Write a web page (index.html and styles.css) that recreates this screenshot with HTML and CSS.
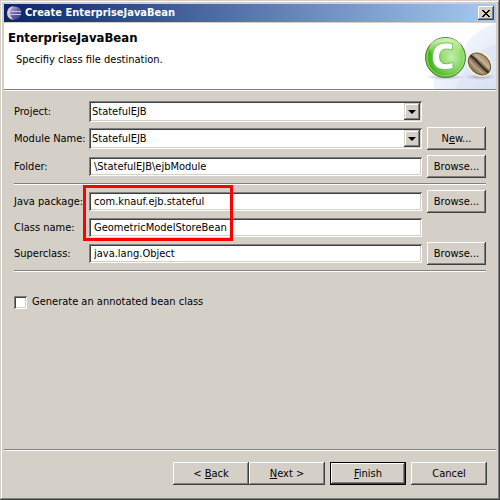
FILE: index.html
```html
<!DOCTYPE html>
<html lang="en">
<head>
    <meta charset="UTF-8">
    <meta name="viewport" content="width=device-width, initial-scale=1.0">
    <title>Create EnterpriseJavaBean</title>
    <link rel="stylesheet" href="styles.css">
</head>
<body>
    <form class="window">
        <div class="title-bar">
            <svg class="title-icon" width="16" height="16" viewBox="0 0 16 16" aria-hidden="true">
                <defs>
                    <linearGradient id="orb" x1="0" y1="0" x2="1" y2="1">
                        <stop offset="0" stop-color="#c9b6d4"/>
                        <stop offset=".5" stop-color="#6d63a5"/>
                        <stop offset="1" stop-color="#343074"/>
                    </linearGradient>
                </defs>
                <circle cx="9" cy="8" r="6.5" fill="url(#orb)"/>
                <path d="M8 1Q1 2 1 8Q1 14 8 15Q4 12 4 8Q4 4 8 1Z" fill="#e3c3cf"/>
                <path d="M3 6.500h12M3 9.500h12" stroke="#b9c9ec"/>
            </svg>
            <span class="title-text">Create EnterpriseJavaBean</span>
            <button type="button" class="close-button" aria-label="Close">
                <svg width="8" height="7" viewBox="0 0 8 7" shape-rendering="crispEdges">
                    <path d="M0 0h2v1h1v1h2v-1h1v-1h2v1h-1v1h-1v1h-1v1h1v1h1v1h1v1h-2v-1h-1v-1h-2v1h-1v1h-2v-1h1v-1h1v-1h1v-1h-1v-1h-1v-1h-1z"/>
                </svg>
            </button>
        </div>

        <header class="banner">
            <div class="banner-text">
                <h1>EnterpriseJavaBean</h1>
                <p>Specifiy class file destination.</p>
            </div>
            <svg class="banner-art" width="75" height="66" viewBox="0 0 75 66" aria-hidden="true">
                <defs>
                    <linearGradient id="sweep" x1="0" y1="0" x2="1" y2="1">
                        <stop offset="0" stop-color="#ffffff"/>
                        <stop offset="1" stop-color="#dbe3f6"/>
                    </linearGradient>
                    <radialGradient id="green" cx=".65" cy=".5" r=".65">
                        <stop offset="0" stop-color="#c4efab"/>
                        <stop offset=".5" stop-color="#82d35c"/>
                        <stop offset=".85" stop-color="#43b51c"/>
                        <stop offset="1" stop-color="#5cc52d"/>
                    </radialGradient>
                    <linearGradient id="gloss" x1="0" y1="0" x2="0" y2="1">
                        <stop offset="0" stop-color="#f2ffd8" stop-opacity=".9"/>
                        <stop offset="1" stop-color="#b6ee86" stop-opacity="0"/>
                    </linearGradient>
                    <linearGradient id="bean" x1="0" y1="0" x2="0" y2="1">
                        <stop offset="0" stop-color="#a08d72"/>
                        <stop offset=".3" stop-color="#bfae92"/>
                        <stop offset=".5" stop-color="#5d4936"/>
                        <stop offset=".7" stop-color="#a8967a"/>
                        <stop offset="1" stop-color="#8a745a"/>
                    </linearGradient>
                    <radialGradient id="shade">
                        <stop offset="0" stop-color="#8d8694" stop-opacity=".6"/>
                        <stop offset="1" stop-color="#8d8694" stop-opacity="0"/>
                    </radialGradient>
                </defs>
                <path d="M75 0Q52 7 42 26Q31 45 13 57V66H75Z" fill="url(#sweep)"/>
                <path d="M75 21Q54 28 45 45Q38 57 34 66H75Z" fill="#d8e1f5" opacity=".5"/>
                <ellipse cx="24" cy="54" rx="20" ry="3" fill="url(#shade)"/>
                <ellipse cx="59" cy="54" rx="16" ry="3" fill="url(#shade)"/>
                <circle cx="24.500" cy="34.500" r="20" fill="url(#green)" stroke="#52754a"/>
                <ellipse cx="24.500" cy="25" rx="16" ry="10" fill="url(#gloss)"/>
                <circle cx="24.500" cy="34.500" r="18.500" fill="none" stroke="#b5ed8b" opacity=".6"/>
                <path d="M32 20.500L31 27Q18.500 23 18.500 34Q18.500 44 32 39.500V45.500Q11.500 50 11.500 34Q11.500 17 32 20.500Z" fill="#fff" stroke="#62b94a" stroke-width=".8"/>
                <g transform="rotate(43 58.500 41)">
                    <ellipse cx="58.500" cy="41" rx="14" ry="11.500" fill="#f7f2d2"/>
                    <ellipse cx="58.500" cy="41" rx="12.500" ry="9.500" fill="url(#bean)" stroke="#6a543c"/>
                    <path d="M46 41Q52 40 58 41Q64 42 71 41" fill="none" stroke="#35261b" stroke-width="1.500"/>
                    <path d="M49 38Q58 36 68 38" fill="none" stroke="#cdbd9f"/>
                    <path d="M49 45Q58 48 67 45" fill="none" stroke="#bba88a"/>
                </g>
            </svg>
        </header>

        <main class="fields">
            <label for="project">Project:</label>
            <div class="combo">
                <select id="project"><option>StatefulEJB</option></select>
                <span class="combo-arrow"></span>
            </div>

            <label for="module">Module Name:</label>
            <div class="combo">
                <select id="module"><option>StatefulEJB</option></select>
                <span class="combo-arrow"></span>
            </div>
            <button type="button" class="button">N<u>e</u>w...</button>

            <label for="folder">Folder:</label>
            <input type="text" id="folder" value="\StatefulEJB\ejbModule">
            <button type="button" class="button">Browse...</button>

            <hr>

            <div class="class-group">
                <label for="package">Java package:</label>
                <input type="text" id="package" value="com.knauf.ejb.stateful">
                <button type="button" class="button">Browse...</button>

                <label for="classname">Class name:</label>
                <input type="text" id="classname" value="GeometricModelStoreBean">
                <span class="highlight"></span>
            </div>

            <label for="superclass">Superclass:</label>
            <input type="text" id="superclass" value="java.lang.Object">
            <button type="button" class="button">Browse...</button>

            <hr>

            <div class="check-row">
                <input type="checkbox" id="annotated">
                <label for="annotated">Generate an annotated bean class</label>
            </div>
        </main>

        <footer class="actions">
            <div class="wizard-nav">
                <button type="button" class="button">&lt; <u>B</u>ack</button>
                <button type="button" class="button">
                    <u>N</u>ext &gt;
                </button>
            </div>
            <button type="submit" class="button default">
                <u>F</u>inish
            </button>
            <button type="button" class="button">Cancel</button>
        </footer>
    </form>
</body>
</html>
```
FILE: styles.css
```css
* {
    box-sizing: border-box;
}

body {
    margin: 0;
    background-color: #d4d0c8;
    color: #000;
    font-family: "DejaVu Sans Condensed", "DejaVu Sans", sans-serif;
    font-size: 11px;
    line-height: 14px;
}

.window {
    display: flex;
    flex-direction: column;
    min-height: 100vh;
    padding: 4px;
    box-shadow: inset -1px -1px #404040, inset 1px 1px #d4d0c8, inset -2px -2px #808080, inset 2px 2px #fff;
}

button,
input,
select {
    margin: 0;
    border: none;
    border-radius: 0;
    color: #000;
    font: inherit;
}

/* title bar */
.title-bar {
    display: flex;
    align-items: center;
    gap: 3px;
    height: 18px;
    padding: 0 2px;
    background: linear-gradient(to right, #0a246a, #a6caf0);
    color: #fff;
}

.title-icon {
    flex: none;
}

.title-text {
    flex: 1;
    font-weight: bold;
}

.close-button {
    display: flex;
    align-items: center;
    justify-content: center;
    width: 16px;
    height: 14px;
    padding: 0;
    background-color: #d4d0c8;
    box-shadow: inset -1px -1px #404040, inset 1px 1px #fff, inset -2px -2px #808080;
}

/* banner */
.banner {
    display: flex;
    justify-content: space-between;
    height: 68px;
    margin-top: 1px;
    border-bottom: 1px solid #fff;
    background-color: #fff;
    box-shadow: inset 0 -1px #808080;
}

.banner-text {
    padding: 7px 4px;
}

.banner h1 {
    margin: 0;
    font-size: 13px;
    line-height: 16px;
}

.banner p {
    margin: 7px 8px;
}

.banner-art {
    flex: none;
}

/* form */
.fields {
    flex: 1;
    padding: 10px;
}

.fields,
.class-group {
    display: grid;
    grid-template-columns: 70px 1fr 59px;
    gap: 5px;
    align-content: start;
    align-items: center;
}

.class-group {
    position: relative;
    grid-column: 1 / -1;
}

.fields label {
    grid-column: 1;
    white-space: nowrap;
}

.combo,
.fields input[type="text"] {
    grid-column: 2;
    min-width: 0;
    background-color: #fff;
    box-shadow: inset 1px 1px #808080, inset -1px -1px #fff, inset 2px 2px #404040, inset -2px -2px #d4d0c8;
}

.fields input[type="text"] {
    height: 19px;
    padding: 0 5px;
}

.combo {
    display: flex;
    height: 21px;
    padding: 2px;
}

.combo select {
    flex: 1;
    min-width: 0;
    padding: 0 1px;
    appearance: none;
    background: none;
}

.combo-arrow {
    display: flex;
    align-items: center;
    justify-content: center;
    width: 16px;
    background-color: #d4d0c8;
    box-shadow: inset -1px -1px #404040, inset 1px 1px #d4d0c8, inset -2px -2px #808080, inset 2px 2px #fff;
    pointer-events: none;
}

.combo-arrow::before {
    content: "";
    border: 4px solid transparent;
    border-top-color: #000;
    border-bottom: none;
}

.button {
    height: 23px;
    padding: 0;
    background-color: #d4d0c8;
    box-shadow: inset -1px -1px #404040, inset 1px 1px #fff, inset -2px -2px #808080;
}

.button.default {
    border: 1px solid #000;
}

hr {
    grid-column: 1 / -1;
    width: 100%;
    height: 2px;
    margin: 0;
    border: none;
    border-top: 1px solid #808080;
    border-bottom: 1px solid #fff;
}

.highlight {
    position: absolute;
    top: -5px;
    left: 69px;
    width: 150px;
    height: 56px;
    border: 3px solid #f00;
    pointer-events: none;
}

.check-row {
    display: flex;
    grid-column: 1 / -1;
    align-items: center;
    gap: 5px;
    margin-top: 18px;
}

.check-row input {
    width: 13px;
    height: 13px;
    appearance: none;
    background-color: #fff;
    box-shadow: inset 1px 1px #808080, inset -1px -1px #fff, inset 2px 2px #404040, inset -2px -2px #d4d0c8;
}

.check-row input:checked {
    background: radial-gradient(#000 3px, #fff 4px);
}

/* bottom buttons */
.actions {
    display: flex;
    justify-content: flex-end;
    gap: 5px;
    padding: 12px 9px 11px;
    border-top: 1px solid #808080;
    box-shadow: inset 0 1px #fff;
}

.actions .button {
    width: 76px;
}

.wizard-nav {
    display: flex;
}
```
